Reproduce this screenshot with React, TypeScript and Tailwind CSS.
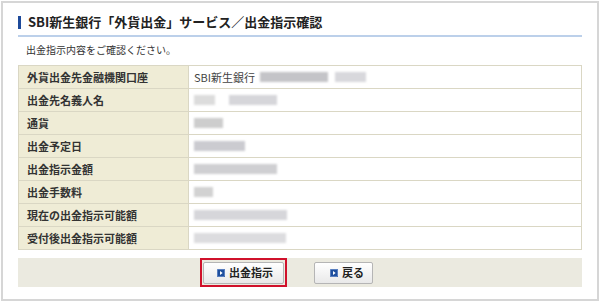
import React from "react";

const font = { fontFamily: '"Noto Sans CJK JP", "Noto Sans", sans-serif' };

function Blur({ w, shade = "#cfcfd2", ml = 0 }: { w: number; shade?: string; ml?: number }) {
  return (
    <div
      className="h-[10px] blur-[1px]"
      style={{ width: w, background: shade, marginLeft: ml }}
    />
  );
}

const rows: { label: string; value: React.ReactNode }[] = [
  {
    label: "外貨出金先金融機関口座",
    value: (
      <div className="flex items-center">
        <span className="text-[11px] text-[#444]">SBI新生銀行</span>
        <Blur w={68} shade="#c4c4c8" ml={5} />
        <Blur w={31} shade="#d8d8dc" ml={7} />
      </div>
    ),
  },
  {
    label: "出金先名義人名",
    value: (
      <div className="flex items-center">
        <Blur w={21} shade="#dcdcdc" />
        <Blur w={48} shade="#d6d6da" ml={14} />
      </div>
    ),
  },
  { label: "通貨", value: <Blur w={29} shade="#cdcdcd" /> },
  { label: "出金予定日", value: <Blur w={51} shade="#cbcbd0" /> },
  { label: "出金指示金額", value: <Blur w={83} shade="#cfcfd2" /> },
  { label: "出金手数料", value: <Blur w={19} shade="#d2d2d2" /> },
  { label: "現在の出金指示可能額", value: <Blur w={93} shade="#d6d6da" /> },
  { label: "受付後出金指示可能額", value: <Blur w={92} shade="#dcdcdf" /> },
];

function Arrow() {
  return (
    <svg width="8" height="8" viewBox="0 0 8 8" className="shrink-0">
      <rect x="0" y="0" width="8" height="8" fill="#1f4f9e" />
      <rect x="0.5" y="0.5" width="7" height="7" fill="none" stroke="#7f9fd6" strokeWidth="0.6" />
      <path d="M3 2 L5.6 4 L3 6 Z" fill="#ffffff" />
    </svg>
  );
}

export default function App() {
  return (
    <div className="w-[600px] h-[303px] bg-white pt-[1px] pl-[1px]" style={font}>
      <div className="w-[598px] h-[300px] border-2 border-[#d6d6d6] px-[15px] pt-[12px]">
        <div className="flex items-center h-[14px]">
          <div className="w-[3px] h-[13px] bg-[#1e4a9a]" />
          <div className="ml-[7px] text-[13px] font-bold text-[#222] leading-[14px] whitespace-nowrap">
            SBI新生銀行「外貨出金」サービス／出金指示確認
          </div>
        </div>
        <div className="mt-[6px] h-[2px] bg-[#bcd0ea]" />
        <div className="mt-[6px] pl-[8px] text-[10px] leading-[14px] text-[#333]">
          出金指示内容をご確認ください。
        </div>
        <div className="mt-[8px] border-t border-x border-[#dad7c4]">
          {rows.map((r) => (
            <div key={r.label} className="flex h-[23px] border-b border-[#dad7c4]">
              <div className="w-[170px] shrink-0 bg-[#efecd6] border-r border-[#dad7c4] flex items-center pl-[8px] text-[11px] font-bold text-[#333]">
                {r.label}
              </div>
              <div className="flex-1 flex items-center pl-[5px] bg-white">{r.value}</div>
            </div>
          ))}
        </div>
        <div className="mt-[8px] h-[29px] bg-[#ebeae0] flex items-center pl-[182px]">
          <div className="h-[29px] border-2 border-[#d0112b] flex items-center px-[1px]">
            <div className="w-[81px] h-[22px] border border-[#b5b5b5] rounded-[2px] bg-gradient-to-b from-white to-[#e9e9e9] flex items-center pl-[13px] gap-[4px]">
              <Arrow />
              <span className="text-[11px] font-bold text-[#222]">出金指示</span>
            </div>
          </div>
          <div className="ml-[27px] w-[59px] h-[22px] border border-[#b5b5b5] rounded-[2px] bg-gradient-to-b from-white to-[#e9e9e9] flex items-center pl-[15px] gap-[4px]">
            <Arrow />
            <span className="text-[11px] font-bold text-[#222]">戻る</span>
          </div>
        </div>
      </div>
    </div>
  );
}
